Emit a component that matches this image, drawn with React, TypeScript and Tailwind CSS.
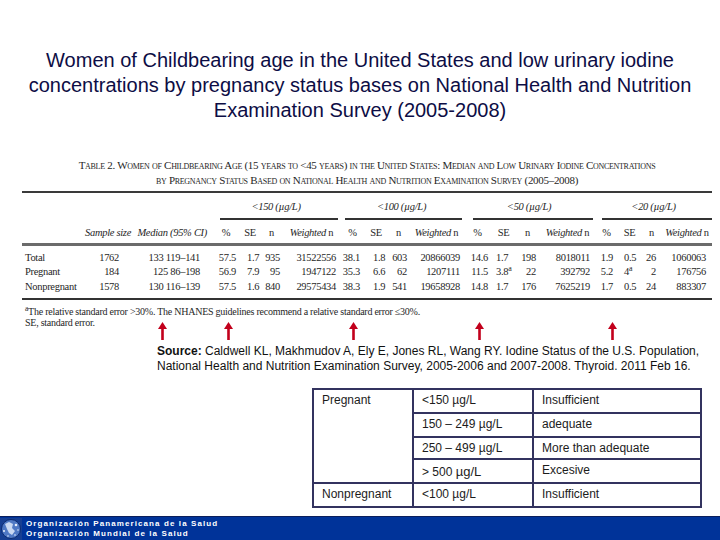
import React from 'react';

const COLS =
  'grid-cols-[63px_45px_82px_28px_20px_23px_57px_25px_22px_23px_53px_29px_23px_25px_55px_23px_23px_21px_50px]';

const CELL = [
  'text-left pl-[3px]',
  'text-right pr-[11px]',
  'text-right pr-[12px]',
  'text-right pr-[4px]',
  'text-left pl-[7px]',
  'text-right pr-[3px]',
  'text-right pr-[4px]',
  'text-right pr-[5px]',
  'text-left pl-[8px]',
  'text-right pr-[3px]',
  'text-right pr-[3px]',
  'text-right pr-[4px]',
  'text-left pl-[4px]',
  'text-right pr-[4px]',
  'text-right pr-[5px]',
  'text-right pr-[5px]',
  'text-left pl-[6px]',
  'text-right pr-[6px]',
  'text-right pr-[6px]',
];

const ROWS: React.ReactNode[][] = [
  ['Total', '1762', '133 119–141', '57.5', '1.7', '935', '31522556', '38.1', '1.8', '603', '20866039', '14.6', '1.7', '198', '8018011', '1.9', '0.5', '26', '1060063'],
  ['Pregnant', '184', '125 86–198', '56.9', '7.9', '95', '1947122', '35.3', '6.6', '62', '1207111', '11.5', <>3.8<sup>a</sup></>, '22', '392792', '5.2', <>4<sup>a</sup></>, '2', '176756'],
  ['Nonpregnant', '1578', '130 116–139', '57.5', '1.6', '840', '29575434', '38.3', '1.9', '541', '19658928', '14.8', '1.7', '176', '7625219', '1.7', '0.5', '24', '883307'],
];

const GROUPS = [
  { label: '<150', rule: 'ml-[8px] mr-[2px]' },
  { label: '<100', rule: 'ml-[5px] mr-[1px]' },
  { label: '<50', rule: 'ml-[10px] mr-[2px]' },
  { label: '<20', rule: 'ml-[7px] mr-0' },
];

const ARROW_GAPS = ['ml-[158px]', 'ml-[57px]', 'ml-[116px]', 'ml-[117px]', 'ml-[124px]'];

function Arrow({ gap }: { gap: string }) {
  return (
    <svg className={gap} width="9" height="18" viewBox="0 0 9 18">
      <polygon points="0,7 4.5,0 9,7" fill="#c2001c" />
      <rect x="3.2" y="6" width="2.6" height="12" fill="#c2001c" />
    </svg>
  );
}

function SurveyTable() {
  return (
    <div className="ml-[22px] w-[690px] font-['Liberation_Serif',serif] text-[10.5px] tracking-[-0.3px] text-[#262626]">
      <div className="text-center text-[11px] leading-[15px] tracking-[-0.3px] [font-variant:small-caps]">
        <p>
          Table 2. Women of Childbearing Age (15 years to &lt;45 years) in the United States: Median and Low Urinary Iodine
          Concentrations
        </p>
        <p>by Pregnancy Status Based on National Health and Nutrition Examination Survey (2005–2008)</p>
      </div>

      <div className="mt-[3px] h-[2px] bg-[#3a3a3a]" />

      <div className={`grid ${COLS}`}>
        <div className="col-span-3" />
        {GROUPS.map((g) => (
          <div key={g.label} className="col-span-4 flex flex-col">
            <div className="pt-[8px] pb-[5px] text-center leading-[12px] italic">
              {g.label} (µg/L)
            </div>
            <div className={`h-[1.5px] bg-[#333] ${g.rule}`} />
          </div>
        ))}
      </div>

      <div className={`grid ${COLS} pt-[7px] pb-[4px] leading-[12px]`}>
        <div />
        <div className="whitespace-nowrap pr-[2px] text-right italic">Sample size</div>
        <div className="whitespace-nowrap pr-[5px] text-right italic">Median (95% CI)</div>
        {GROUPS.map((g) => (
          <React.Fragment key={g.label}>
            <div className="text-center">%</div>
            <div className="text-center">SE</div>
            <div className="text-center">n</div>
            <div className="whitespace-nowrap text-center">
              <span className="italic">Weighted</span> n
            </div>
          </React.Fragment>
        ))}
      </div>

      <div className="h-[3px] bg-[#6b6b6b]" />

      <div className="pt-[5px] pb-[4px]">
        {ROWS.map((row, i) => (
          <div key={i} className={`grid ${COLS} leading-[14.5px]`}>
            {row.map((value, j) => (
              <div key={j} className={`whitespace-nowrap ${CELL[j]}`}>
                {value}
              </div>
            ))}
          </div>
        ))}
      </div>

      <div className="h-[2px] bg-[#333]" />

      <div className="mt-[7px] pl-[3px] text-[10px] leading-[10.5px] tracking-[-0.25px]">
        <p>
          <sup>a</sup>The relative standard error &gt;30%. The NHANES guidelines recommend a relative standard error ≤30%.
        </p>
        <p>SE, standard error.</p>
      </div>
    </div>
  );
}

function LevelsTable() {
  const cell = 'bg-white pl-[8px] pt-[3px] leading-[14px]';
  return (
    <div className="ml-[312px] grid w-[390px] grid-cols-[98px_118px_166px] gap-[2px] bg-[#33335f] p-[2px] font-['Liberation_Sans',Arial,sans-serif] text-[12px] text-[#1c1c1c]">
      <div className={`${cell} row-span-4`}>Pregnant</div>
      <div className={`${cell} h-[22px]`}>&lt;150 µg/L</div>
      <div className={`${cell} h-[22px]`}>Insufficient</div>
      <div className={`${cell} h-[22px]`}>150 – 249 µg/L</div>
      <div className={`${cell} h-[22px]`}>adequate</div>
      <div className={`${cell} h-[20px]`}>250 – 499 µg/L</div>
      <div className={`${cell} h-[20px]`}>More than adequate</div>
      <div className={`${cell} h-[22px] pt-[5px]`}>
        &gt; 500 <span className="text-[13px]">µg/L</span>
      </div>
      <div className={`${cell} h-[22px] pt-[2px]`}>Excesive</div>
      <div className={`${cell} h-[22px]`}>Nonpregnant</div>
      <div className={`${cell} h-[22px]`}>&lt;100 µg/L</div>
      <div className={`${cell} h-[22px]`}>Insufficient</div>
    </div>
  );
}

function PahoLogo() {
  return (
    <svg width="22" height="22" viewBox="0 0 22 22">
      <rect width="22" height="22" fill="#173f93" />
      <circle cx="11" cy="11" r="9.5" fill="#4f78c4" />
      <circle cx="11" cy="11" r="9.5" fill="none" stroke="#0b2a70" strokeWidth="1" />
      <path d="M5 6 L9 4 L13 6 L12 10 L15 13 L12 17 L9 15 L7 11 Z" fill="#c9d8f2" />
      <circle cx="16" cy="7" r="1.3" fill="#e8eefa" />
      <circle cx="4" cy="13" r="1" fill="#e8eefa" />
      <circle cx="15" cy="17" r="1" fill="#a9c0ea" />
      <circle cx="8" cy="18" r="0.9" fill="#a9c0ea" />
      <circle cx="18" cy="12" r="0.8" fill="#dfe8f8" />
    </svg>
  );
}

export default function App() {
  return (
    <div className="flex h-[540px] w-[720px] flex-col overflow-hidden bg-white">
      <h1 className="pt-[48px] text-center font-['Liberation_Sans',Arial,sans-serif] text-[20px] leading-[25px] text-[#0d0d45]">
        Women of Childbearing age in the United States and low urinary iodine
        <br />
        concentrations by pregnancy status bases on National Health and Nutrition
        <br />
        Examination Survey (2005-2008)
      </h1>

      <div className="mt-[35px]">
        <SurveyTable />
      </div>

      <div className="-mt-[6px] flex h-[18px] items-start">
        {ARROW_GAPS.map((g) => (
          <Arrow key={g} gap={g} />
        ))}
      </div>

      <div className="mt-[4px] ml-[157px] font-['Liberation_Sans',Arial,sans-serif] text-[12px] leading-[15px] text-[#111]">
        <p>
          <span className="font-bold">Source:</span> Caldwell KL, Makhmudov A, Ely E, Jones RL, Wang RY. Iodine Status of the
          U.S. Population,
        </p>
        <p>National Health and Nutrition Examination Survey, 2005-2006 and 2007-2008. Thyroid. 2011 Feb 16.</p>
      </div>

      <div className="mt-[14px]">
        <LevelsTable />
      </div>

      <footer className="mt-auto flex h-[24px] items-center gap-[4px] border-t border-[#0b1f5c] bg-[#003399]">
        <PahoLogo />
        <div className="font-['Liberation_Sans',Arial,sans-serif] text-[8px] leading-[10px] font-bold tracking-[1.1px] text-white">
          <p>Organización Panamericana de la Salud</p>
          <p>Organización Mundial de la Salud</p>
        </div>
      </footer>
    </div>
  );
}
